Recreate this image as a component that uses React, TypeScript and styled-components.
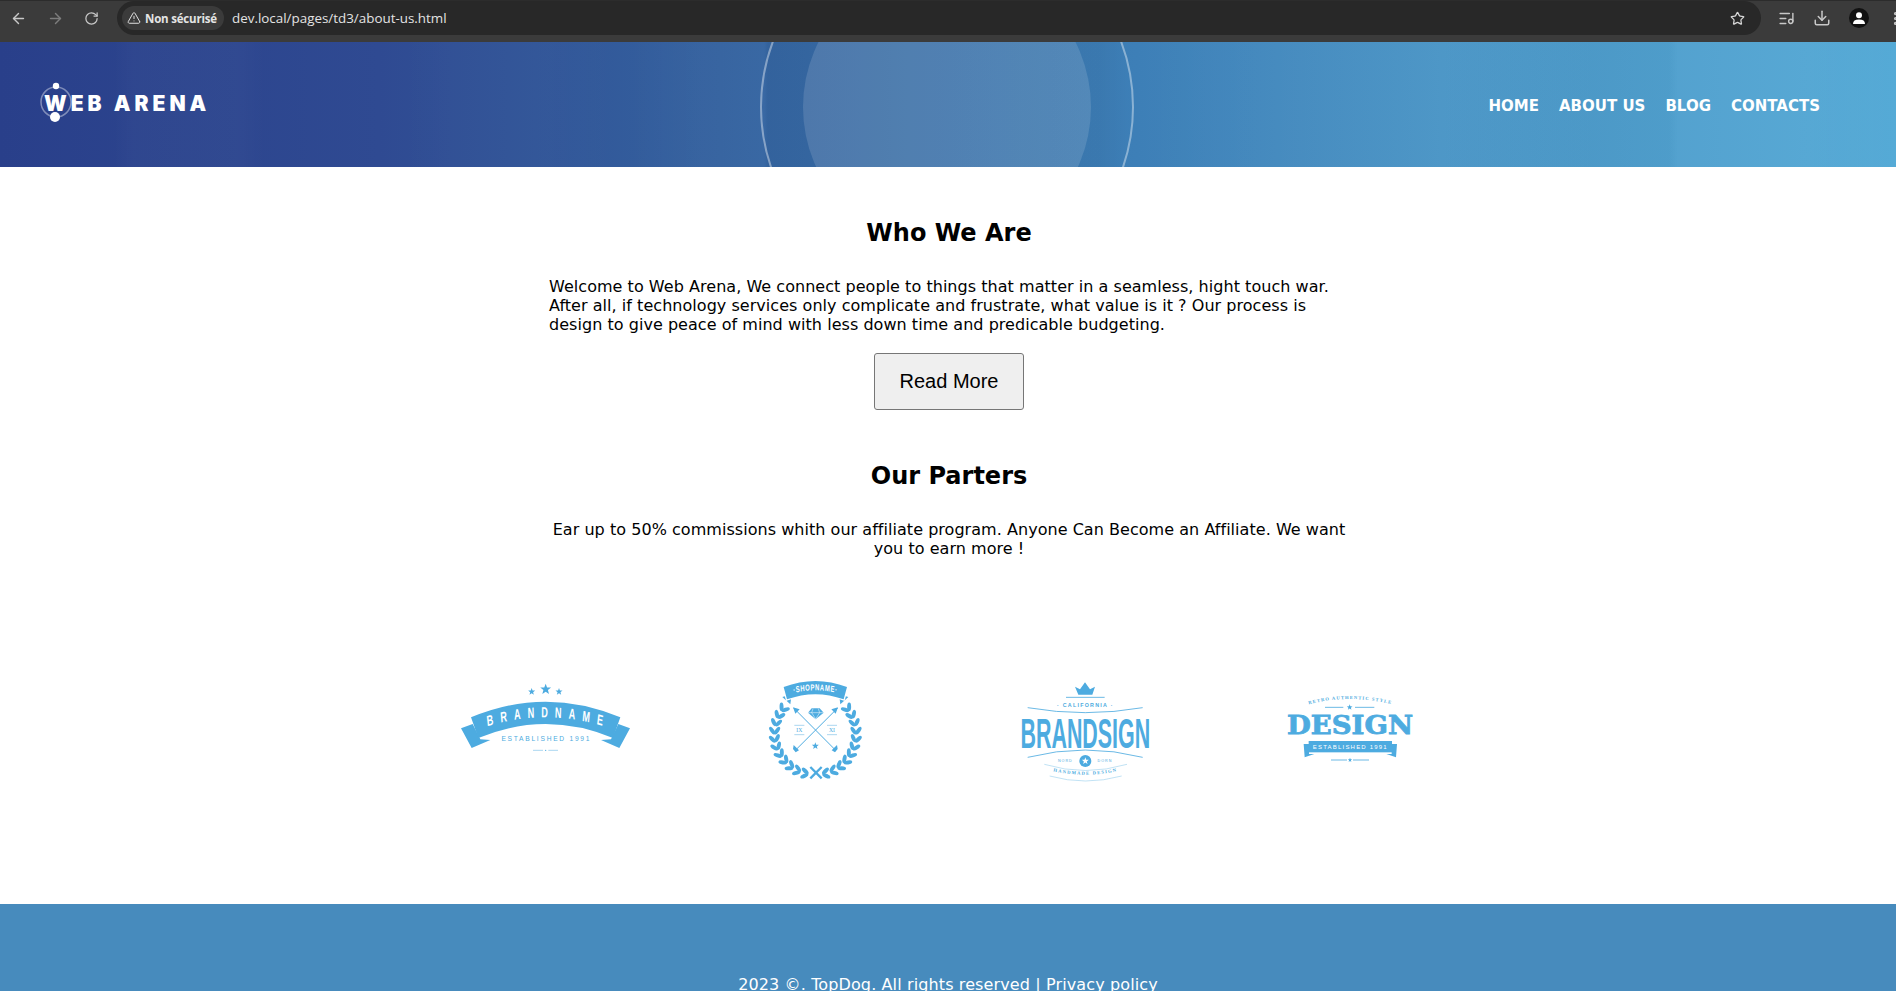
import React from "react";
import styled, { createGlobalStyle } from "styled-components";
import { ArrowLeft, ArrowRight, RotateCw, TriangleAlert, Star, Download, ListMusic, EllipsisVertical } from "lucide-react";

const Global = createGlobalStyle`
  html, body { margin: 0; padding: 0; height: 100%; overflow: hidden; background: #fff; }
  * { box-sizing: border-box; }
`;

const Page = styled.div`
  height: 991px;
  overflow: hidden;
  font-family: "DejaVu Sans", Verdana, sans-serif;
  color: #000;
`;

const Chrome = styled.div`
  height: 42px;
  background: #3b3b3b;
  border-top: 1px solid #2c2c2c;
  display: flex;
  align-items: flex-start;
  overflow: hidden;
`;

const NavIcons = styled.div`
  flex: none;
  width: 117px;
  height: 34px;
  display: flex;
  align-items: center;
  gap: 20px;
  padding-left: 10px;
  color: #c8c8c8;
`;

const IconSlot = styled.span<{ $dim?: boolean }>`
  display: flex;
  color: ${(p) => (p.$dim ? "#7d7d7d" : "#c8c8c8")};
`;

const Omnibox = styled.div`
  flex: none;
  width: 1644px;
  height: 34px;
  border-radius: 17px;
  background: #282828;
  display: flex;
  align-items: center;
  padding: 0 16px 0 5px;
`;

const SecurityChip = styled.div`
  height: 24px;
  width: 102px;
  border-radius: 12px;
  background: #3b3b3b;
  color: #e4e4e4;
  display: flex;
  align-items: center;
  gap: 4px;
  padding-left: 5px;
  font: 700 11.5px "Open Sans", "Noto Sans", sans-serif;
  white-space: nowrap;
  letter-spacing: -0.2px;
`;

const Url = styled.div`
  margin-left: 8px;
  flex: 1;
  color: #e3e3e3;
  font: 400 13.4px "Open Sans", "Noto Sans", sans-serif;
`;

const ToolIcons = styled.div`
  flex: none;
  height: 34px;
  display: flex;
  align-items: center;
  padding-left: 17px;
  gap: 18px;
  color: #c8c8c8;
`;

const Avatar = styled.span`
  width: 20px;
  height: 20px;
  border-radius: 50%;
  background: #111;
  display: flex;
  align-items: center;
  justify-content: center;
`;

const Header = styled.header`
  position: relative;
  height: 125px;
  overflow: hidden;
  display: flex;
  align-items: center;
  justify-content: space-between;
  padding: 0 76px 0 40px;
  background:
    linear-gradient(90deg, transparent 6%, rgba(255,255,255,0.02) 7% 12.5%, transparent 14%, transparent 21%, rgba(255,255,255,0.012) 24% 28%, transparent 33%, rgba(255,255,255,0.02) 37% 40.3%, rgba(0,0,0,0.03) 40.5% 58%, transparent 59.5%, rgba(255,255,255,0.02) 68% 76%, rgba(0,0,0,0.02) 84% 88%, rgba(255,255,255,0.025) 88.5% 95%, transparent 100%),
    linear-gradient(90deg, #293f8a 0%, #2f4a92 20%, #34629f 38%, #3d7fb7 60%, #4a95c6 76%, #55aad6 100%);
`;

const Disc = styled.div`
  position: absolute;
  left: 803px;
  top: -79px;
  width: 288px;
  height: 288px;
  border-radius: 50%;
  background: rgba(255, 255, 255, 0.13);
`;

const Ring = styled.div`
  position: absolute;
  left: 760px;
  top: -122px;
  width: 374px;
  height: 374px;
  border-radius: 50%;
  border: 2px solid rgba(255, 255, 255, 0.4);
`;

const LogoWrap = styled.div`
  position: relative;
  z-index: 1;
  display: flex;
  align-items: center;
  height: 44px;
  margin-top: -3px;
`;

const LogoMark = styled.svg`
  position: absolute;
  left: 0;
  top: 0;
  width: 36px;
  height: 44px;
`;

const LogoText = styled.div`
  position: relative;
  padding-left: 4px;
  color: #fff;
  font: 900 21px Inter, Lato, sans-serif;
  letter-spacing: 4px;
  white-space: nowrap;
`;

const Nav = styled.nav`
  position: relative;
  z-index: 1;
  display: flex;
  gap: 20px;
  margin-top: 2px;
`;

const NavLink = styled.a`
  color: #fff;
  font: 700 15px "DejaVu Sans", Verdana, sans-serif;
  white-space: nowrap;
`;

const Main = styled.main`
  padding: 52px 0 0 2px;
  display: flex;
  flex-direction: column;
  align-items: center;
`;

const Title = styled.h2`
  margin: 0;
  font-size: 24px;
  line-height: 28px;
  font-weight: 700;
  text-align: center;
`;

const Copy = styled.p<{ $center?: boolean }>`
  width: 800px;
  margin: 30px 0 0;
  font-size: 16px;
  line-height: 19px;
  letter-spacing: 0.04px;
  text-align: ${(p) => (p.$center ? "center" : "left")};
`;

const ReadMore = styled.button`
  width: 150px;
  height: 57px;
  margin: 19px 0 52px;
  background: #efefef;
  border: 1px solid #767676;
  border-radius: 3px;
  font: 400 20px "Liberation Sans", Arial, sans-serif;
  color: #000;
`;

const Partners = styled.div`
  margin-top: 102px;
  display: grid;
  grid-template-columns: 264px 266px 274px 256px;
  justify-items: center;
`;

const Footer = styled.footer`
  margin-top: 114px;
  height: 140px;
  padding-top: 71px;
  background: #478bbd;
  color: #fff;
  text-align: center;
  font-size: 16px;
  line-height: 19px;
  letter-spacing: 0.12px;
`;

const BLUE = "#4dabe0";

const star = (cx: number, cy: number, r: number) => {
  const pts: string[] = [];
  for (let i = 0; i < 10; i++) {
    const rad = i % 2 === 0 ? r : r * 0.42;
    const a = (Math.PI / 5) * i - Math.PI / 2;
    pts.push(`${(cx + rad * Math.cos(a)).toFixed(1)},${(cy + rad * Math.sin(a)).toFixed(1)}`);
  }
  return pts.join(" ");
};

const BrandName = () => (
  <svg width={220} height={130} viewBox="0 0 660 390">
    <polygon points={star(272, 95, 11)} fill={BLUE} />
    <polygon points={star(314, 88, 17)} fill={BLUE} />
    <polygon points={star(354, 95, 11)} fill={BLUE} />
    <path d="M60 205 L95 192 L118 238 L148 240 L92 264 Z" fill={BLUE} />
    <path d="M567 205 L532 192 L510 238 L480 240 L535 264 Z" fill={BLUE} />
    <path d="M90 172 Q314 78 538 172 L516 234 Q314 150 112 234 Z" fill={BLUE} />
    <g transform="translate(314 0) scale(0.62 1)">
      <path id="bn-arc" d="M-320 207 Q0 137 320 207" fill="none" />
      <text fill="#fff" fontFamily="'Liberation Sans', sans-serif" fontWeight={700} fontSize={44} letterSpacing={34}>
        <textPath href="#bn-arc" startOffset="52%" textAnchor="middle">BRANDNAME</textPath>
      </text>
    </g>
    <text x={316} y={244} textAnchor="middle" fill={BLUE} fontFamily="'Liberation Sans', sans-serif" fontSize={20} letterSpacing={5.2}>ESTABLISHED 1991</text>
    <path d="M276 271 H306 M322 271 H351" stroke={BLUE} strokeWidth={2} opacity={0.7} />
    <circle cx={314} cy={271} r={2} fill={BLUE} />
  </svg>
);

const Laurel = () => {
  const leaves: React.ReactNode[] = [];
  const cx = 193, cy = 207, R = 122;
  for (let i = 0; i < 11; i++) {
    const deg = 80 - i * 11.4;
    const a = (deg * Math.PI) / 180;
    const px = cx + R * Math.cos(a);
    const py = cy + R * Math.sin(a);
    [deg - 55, deg - 125].forEach((dir, j) => {
      const d = (dir * Math.PI) / 180;
      const x = px + 13 * Math.cos(d);
      const y = py + 13 * Math.sin(d);
      leaves.push(<ellipse key={`${i}-${j}`} cx={x} cy={y} rx={13} ry={6} fill={BLUE} transform={`rotate(${dir} ${x} ${y})`} />);
    });
  }
  return <>{leaves}</>;
};

const ShopName = () => (
  <svg width={130} height={130} viewBox="0 -15 390 390">
    <Laurel />
    <g transform="translate(386 0) scale(-1 1)"><Laurel /></g>
    <path d="M178 306 L212 340 M212 306 L178 340" stroke={BLUE} strokeWidth={7} />
    <path d="M94 96 L122 88 L118 118 Z M292 96 L264 88 L268 118 Z" fill={BLUE} />
    <path d="M98 66 Q193 30 288 66 L278 103 Q193 72 108 103 Z" fill="#fff" stroke="#fff" strokeWidth={8} />
    <path d="M98 66 Q193 30 288 66 L278 103 Q193 72 108 103 Z" fill={BLUE} />
    <g transform="translate(193 0) scale(0.68 1)">
      <path id="sn-arc" d="M-125 90 Q0 62 125 90" fill="none" />
      <text fill="#fff" fontFamily="'Liberation Sans', sans-serif" fontWeight={700} fontSize={26} letterSpacing={2.6}>
        <textPath href="#sn-arc" startOffset="50%" textAnchor="middle">·SHOPNAME·</textPath>
      </text>
    </g>
    <path d="M128 129 L252 254 M260 129 L135 254" stroke={BLUE} strokeWidth={3} fill="none" />
    <path d="M126 127 L146 133 L133 146 Z M261 127 L241 133 L254 146 Z" fill={BLUE} />
    <path d="M128 240 L144 256 L134 262 L126 252 Z M258 240 L242 256 L252 262 L260 252 Z" fill={BLUE} />
    <path d="M182 130 H206 L218 143 L194 163 L171 143 Z" fill={BLUE} />
    <path d="M171 143 H218 M186 131 L182 143 L194 162 L206 143 L202 131" stroke="#fff" strokeWidth={1.5} fill="none" />
    <polygon points={star(193, 243, 11)} fill={BLUE} />
    <path d="M130 181 H160 M130 209 H160 M228 181 H258 M228 209 H258" stroke={BLUE} strokeWidth={2} opacity={0.7} />
    <text x={145} y={202} textAnchor="middle" fill={BLUE} fontFamily="'Liberation Serif', serif" fontSize={17}>IX</text>
    <text x={243} y={202} textAnchor="middle" fill={BLUE} fontFamily="'Liberation Serif', serif" fontSize={17}>XI</text>
  </svg>
);

const BrandSign = () => (
  <svg width={170} height={130} viewBox="0 -30 510 390">
    <path d="M222 50 L237 58 L252 37 L267 58 L282 50 L274 74 H232 Z" fill={BLUE} />
    <path d="M195 82 H311" stroke={BLUE} strokeWidth={2.5} />
    <text x={253} y={111} textAnchor="middle" fill={BLUE} fontFamily="'Liberation Sans', sans-serif" fontWeight={700} fontSize={16} letterSpacing={3.8}>· CALIFORNIA ·</text>
    <path d="M80 113 Q253 143 425 113" stroke={BLUE} strokeWidth={2.5} fill="none" />
    <g transform="translate(253 0) scale(0.502 1)">
      <text x={0} y={235} textAnchor="middle" fill={BLUE} fontFamily="'Liberation Sans', sans-serif" fontWeight={700} fontSize={128}>BRANDSIGN</text>
    </g>
    <path d="M80 262 Q253 218 425 262" stroke={BLUE} strokeWidth={2.5} fill="none" />
    <text x={193} y={277} textAnchor="middle" fill={BLUE} fontFamily="'Liberation Sans', sans-serif" fontSize={11} letterSpacing={3}>NORD</text>
    <text x={312} y={277} textAnchor="middle" fill={BLUE} fontFamily="'Liberation Sans', sans-serif" fontSize={11} letterSpacing={3}>DORN</text>
    <circle cx={253} cy={273} r={18} fill={BLUE} />
    <polygon points={star(253, 273, 11)} fill="#fff" />
    <path id="hm-arc" d="M120 294 Q253 334 386 294" fill="none" />
    <path d="M130 283 Q253 320 378 283 M146 318 Q253 348 362 318" stroke={BLUE} strokeWidth={1.5} fill="none" opacity={0.7} />
    <text fill={BLUE} fontFamily="'Liberation Serif', serif" fontWeight={700} fontSize={14} letterSpacing={3.5}>
      <textPath href="#hm-arc" startOffset="50%" textAnchor="middle">HANDMADE DESIGN</textPath>
    </text>
  </svg>
);

const DesignLogo = () => (
  <svg width={160} height={130} viewBox="0 -60 480 390">
    <path id="rs-arc" d="M70 86 Q238 28 406 86" fill="none" />
    <text fill={BLUE} fontFamily="'Liberation Serif', serif" fontWeight={700} fontSize={14} letterSpacing={3.1}>
      <textPath href="#rs-arc" startOffset="50%" textAnchor="middle">RETRO AUTHENTIC STYLE</textPath>
    </text>
    <path d="M162 82 H217 M252 82 H310" stroke={BLUE} strokeWidth={2.5} />
    <polygon points={star(236, 82, 9)} fill={BLUE} />
    <text x={237} y={162} textAnchor="middle" fill={BLUE} fontFamily="'DejaVu Serif', serif" fontWeight={900} fontSize={80} stroke={BLUE} strokeWidth={2.5} textLength={378} lengthAdjust="spacingAndGlyphs">DESIGN</text>
    <path d="M98 192 H114 V222 H130 L101 232 Z M378 192 H362 V222 H346 L375 232 Z" fill={BLUE} />
    <rect x={113} y={183} width={250} height={34} fill={BLUE} />
    <text x={238} y={206} textAnchor="middle" fill="#fff" fontFamily="'Liberation Sans', sans-serif" fontSize={18} letterSpacing={3.6}>ESTABLISHED 1991</text>
    <path d="M180 240 H228 M246 240 H294" stroke={BLUE} strokeWidth={2.5} />
    <polygon points={star(237, 240, 7)} fill={BLUE} />
  </svg>
);

export default function App() {
  return (
    <Page>
      <Global />
      <Chrome>
        <NavIcons>
          <IconSlot><ArrowLeft size={17} strokeWidth={2} /></IconSlot>
          <IconSlot $dim><ArrowRight size={17} strokeWidth={2} /></IconSlot>
          <IconSlot><RotateCw size={15} strokeWidth={2} /></IconSlot>
        </NavIcons>
        <Omnibox>
          <SecurityChip><TriangleAlert size={14} strokeWidth={1.7} />Non sécurisé</SecurityChip>
          <Url>dev.local/pages/td3/about-us.html</Url>
          <Star size={15} strokeWidth={2} color="#d8d8d8" />
        </Omnibox>
        <ToolIcons>
          <ListMusic size={17} strokeWidth={2} />
          <Download size={18} strokeWidth={2} />
          <Avatar>
            <svg width="14" height="14" viewBox="0 0 14 14">
              <circle cx="7" cy="4.2" r="3" fill="#fff" />
              <path d="M1 13 Q1 8.6 7 8.6 Q13 8.6 13 13 Z" fill="#fff" />
            </svg>
          </Avatar>
          <IconSlot><EllipsisVertical size={17} strokeWidth={2.5} /></IconSlot>
        </ToolIcons>
      </Chrome>

      <Header>
        <Disc />
        <Ring />
        <LogoWrap>
          <LogoMark viewBox="0 0 36 44">
            <circle cx="16" cy="21" r="15" fill="none" stroke="#fff" strokeOpacity={0.4} strokeWidth={1.5} />
            <circle cx="16" cy="5" r="3.2" fill="#fff" />
            <circle cx="15" cy="36" r="5" fill="#fff" />
          </LogoMark>
          <LogoText>WEB ARENA</LogoText>
        </LogoWrap>
        <Nav>
          <NavLink>HOME</NavLink>
          <NavLink>ABOUT US</NavLink>
          <NavLink>BLOG</NavLink>
          <NavLink>CONTACTS</NavLink>
        </Nav>
      </Header>

      <Main>
        <Title>Who We Are</Title>
        <Copy>
          Welcome to Web Arena, We connect people to things that matter in a seamless, hight touch war. After all, if technology services only complicate and frustrate, what value is it ? Our process is design to give peace of mind with less down time and predicable budgeting.
        </Copy>
        <ReadMore>Read More</ReadMore>
        <Title>Our Parters</Title>
        <Copy $center>
          Ear up to 50% commissions whith our affiliate program. Anyone Can Become an Affiliate. We want you to earn more !
        </Copy>
        <Partners>
          <BrandName />
          <ShopName />
          <BrandSign />
          <DesignLogo />
        </Partners>
      </Main>

      <Footer>2023 ©. TopDog. All rights reserved | Privacy policy</Footer>
    </Page>
  );
}
